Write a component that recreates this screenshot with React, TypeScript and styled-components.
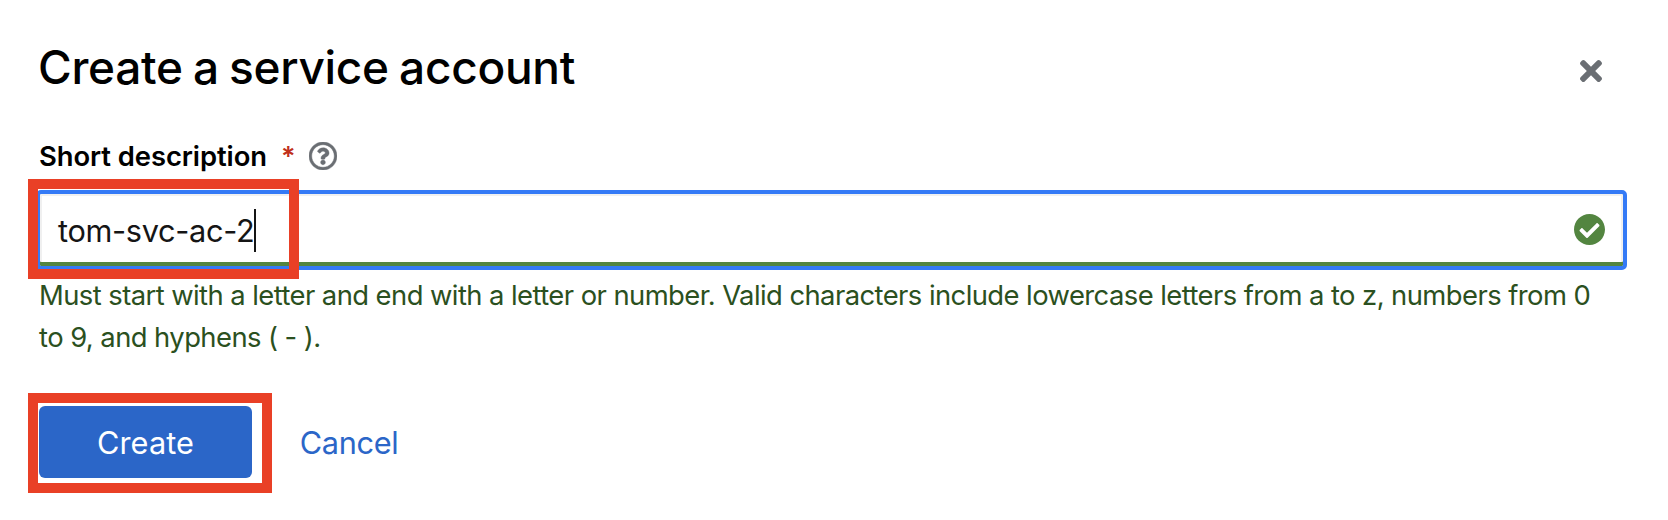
import React from 'react';
import styled, { createGlobalStyle } from 'styled-components';

const GlobalStyle = createGlobalStyle`
  * { box-sizing: border-box; }
  body {
    margin: 0;
    background: #fff;
    font-family: Inter, "Liberation Sans", sans-serif;
  }
`;

const Modal = styled.main`
  width: 1668px;
  height: 520px;
  padding: 36px 43px 0 39px;
  background: #fff;
`;

const Header = styled.header`
  display: flex;
  align-items: center;
  justify-content: space-between;
  height: 62px;
  padding-right: 23px;
`;

const Title = styled.h1`
  margin: 0 0 0 -1px;
  color: #000;
  font-size: 46px;
  font-weight: 500;
  line-height: 62px;
  letter-spacing: -0.3px;
  word-spacing: -1.7px;
`;

const IconButton = styled.button<{ $drop?: number }>`
  display: flex;
  margin-top: ${(p) => p.$drop ?? 0}px;
  padding: 0;
  border: 0;
  background: none;
  color: #6a6e73;
`;

const LabelRow = styled.div`
  display: flex;
  align-items: center;
  height: 40px;
  margin-top: 38px;
`;

const Label = styled.label`
  color: #000;
  font-size: 27.4px;
  font-weight: 600;
  line-height: 40px;
  letter-spacing: -0.07px;
  white-space: nowrap;
`;

const Required = styled.span`
  width: 14px;
  margin: 1px 14px 0 14px;
  color: #c0301c;
  font-size: 27px;
  font-weight: 600;
  line-height: 40px;
`;

const Field = styled.div`
  position: relative;
  display: flex;
  align-items: center;
  width: 1591px;
  height: 80px;
  margin: 14px 0 0 -3px;
  padding: 0 18px;
  border: 4px solid #347af6;
  border-radius: 5px;
  box-shadow: inset 0 -4px #538540, inset 0 2px #f0f0f0, inset -2px 0 #f0f0f0,
    inset 2px 0 #f0f0f0;
`;

const Value = styled.span`
  padding-top: 2px;
  color: #151515;
  font-size: 30.7px;
  line-height: 70px;
  letter-spacing: -0.32px;
`;

const Caret = styled.span`
  width: 2px;
  height: 43px;
  background: #151515;
`;

const StatusIcon = styled.span`
  display: flex;
  margin: -2px 0 0 auto;
`;

const Helper = styled.p`
  margin: 4px 0 0;
  color: #2b5020;
  font-size: 27.4px;
  line-height: 42px;
  letter-spacing: -0.565px;
  white-space: nowrap;
`;

const Actions = styled.div`
  position: relative;
  display: flex;
  margin-top: 48px;
`;

const Button = styled.button<{ $primary?: boolean }>`
  width: ${(p) => (p.$primary ? '213px' : '194px')};
  height: 72px;
  padding: 2px 0 0;
  border: 0;
  border-radius: 6px;
  background: ${(p) => (p.$primary ? '#2b66c8' : 'transparent')};
  color: ${(p) => (p.$primary ? '#fff' : '#2b66c8')};
  font: 400 30.7px/70px Inter, 'Liberation Sans', sans-serif;
  letter-spacing: ${(p) => (p.$primary ? '0.1px' : '-0.35px')};
`;

const Highlight = styled.span<{ $width: number; $left: number; $top: number }>`
  position: absolute;
  left: ${(p) => p.$left}px;
  top: ${(p) => p.$top}px;
  width: ${(p) => p.$width}px;
  height: 100px;
  border: 10px solid #e94026;
  pointer-events: none;
`;

const CloseIcon = () => (
  <svg width="22" height="22" viewBox="0 0 352 352" fill="currentColor">
    <path d="M242.72 176l100.07-100.07c12.28-12.28 12.28-32.19 0-44.48l-22.24-22.24c-12.28-12.28-32.19-12.28-44.48 0L176 109.28 75.93 9.21c-12.28-12.28-32.19-12.28-44.48 0L9.21 31.45c-12.28 12.28-12.28 32.19 0 44.48L109.28 176 9.21 276.07c-12.28 12.28-12.28 32.19 0 44.48l22.24 22.24c12.28 12.28 32.2 12.28 44.48 0L176 242.72l100.07 100.07c12.28 12.28 32.2 12.28 44.48 0l22.24-22.24c12.28-12.28 12.28-32.19 0-44.48L242.72 176z" />
  </svg>
);

const HelpIcon = () => (
  <svg width="28" height="28" viewBox="8 8 496 496" fill="currentColor" stroke="currentColor" strokeWidth="8">
    <path d="M256 8C119.043 8 8 119.083 8 256c0 136.997 111.043 248 248 248s248-111.003 248-248C504 119.083 392.957 8 256 8zm0 448c-110.532 0-200-89.431-200-200 0-110.495 89.472-200 200-200 110.491 0 200 89.471 200 200 0 110.53-89.431 200-200 200zm107.244-255.2c0 67.052-72.421 68.084-72.421 92.863V300c0 6.627-5.373 12-12 12h-45.647c-6.627 0-12-5.373-12-12v-8.659c0-35.745 27.1-50.034 47.579-61.516 17.561-9.845 28.324-16.541 28.324-29.579 0-17.246-21.999-28.693-39.784-28.693-23.189 0-33.894 10.977-48.942 29.969-4.057 5.12-11.46 6.071-16.666 2.124l-27.824-21.098c-5.107-3.872-6.251-11.066-2.644-16.363C184.846 131.491 214.94 112 261.794 112c49.071 0 101.45 38.304 101.45 88.8zM298 368c0 23.159-18.841 42-42 42s-42-18.841-42-42 18.841-42 42-42 42 18.841 42 42z" />
  </svg>
);

const CheckIcon = () => (
  <svg width="31" height="31" viewBox="8 8 496 496" fill="#538540">
    <path d="M504 256c0 136.967-111.033 248-248 248S8 392.967 8 256 119.033 8 256 8s248 111.033 248 248zM227.314 387.314l184-184c6.248-6.248 6.248-16.379 0-22.627l-22.627-22.627c-6.248-6.249-16.379-6.249-22.628 0L216 308.118l-70.059-70.059c-6.248-6.248-16.379-6.248-22.628 0l-22.627 22.627c-6.248 6.248-6.248 16.379 0 22.627l104 104c6.249 6.249 16.379 6.249 22.628.001z" />
  </svg>
);

export default function App() {
  return (
    <>
      <GlobalStyle />
      <Modal>
        <Header>
          <Title>Create a service account</Title>
          <IconButton $drop={8} aria-label="Close">
            <CloseIcon />
          </IconButton>
        </Header>
        <LabelRow>
          <Label>Short description</Label>
          <Required>*</Required>
          <IconButton aria-label="More info">
            <HelpIcon />
          </IconButton>
        </LabelRow>
        <Field>
          <Value>tom-svc-ac-2</Value>
          <Caret />
          <StatusIcon>
            <CheckIcon />
          </StatusIcon>
          <Highlight $left={-12} $top={-15} $width={271} />
        </Field>
        <Helper>
          Must start with a letter and end with a letter or number. Valid characters include
          lowercase letters from a to z, numbers from 0<br />
          to 9, and hyphens ( - ).
        </Helper>
        <Actions>
          <Button $primary>Create</Button>
          <Button>Cancel</Button>
          <Highlight $left={-11} $top={-13} $width={244} />
        </Actions>
      </Modal>
    </>
  );
}
